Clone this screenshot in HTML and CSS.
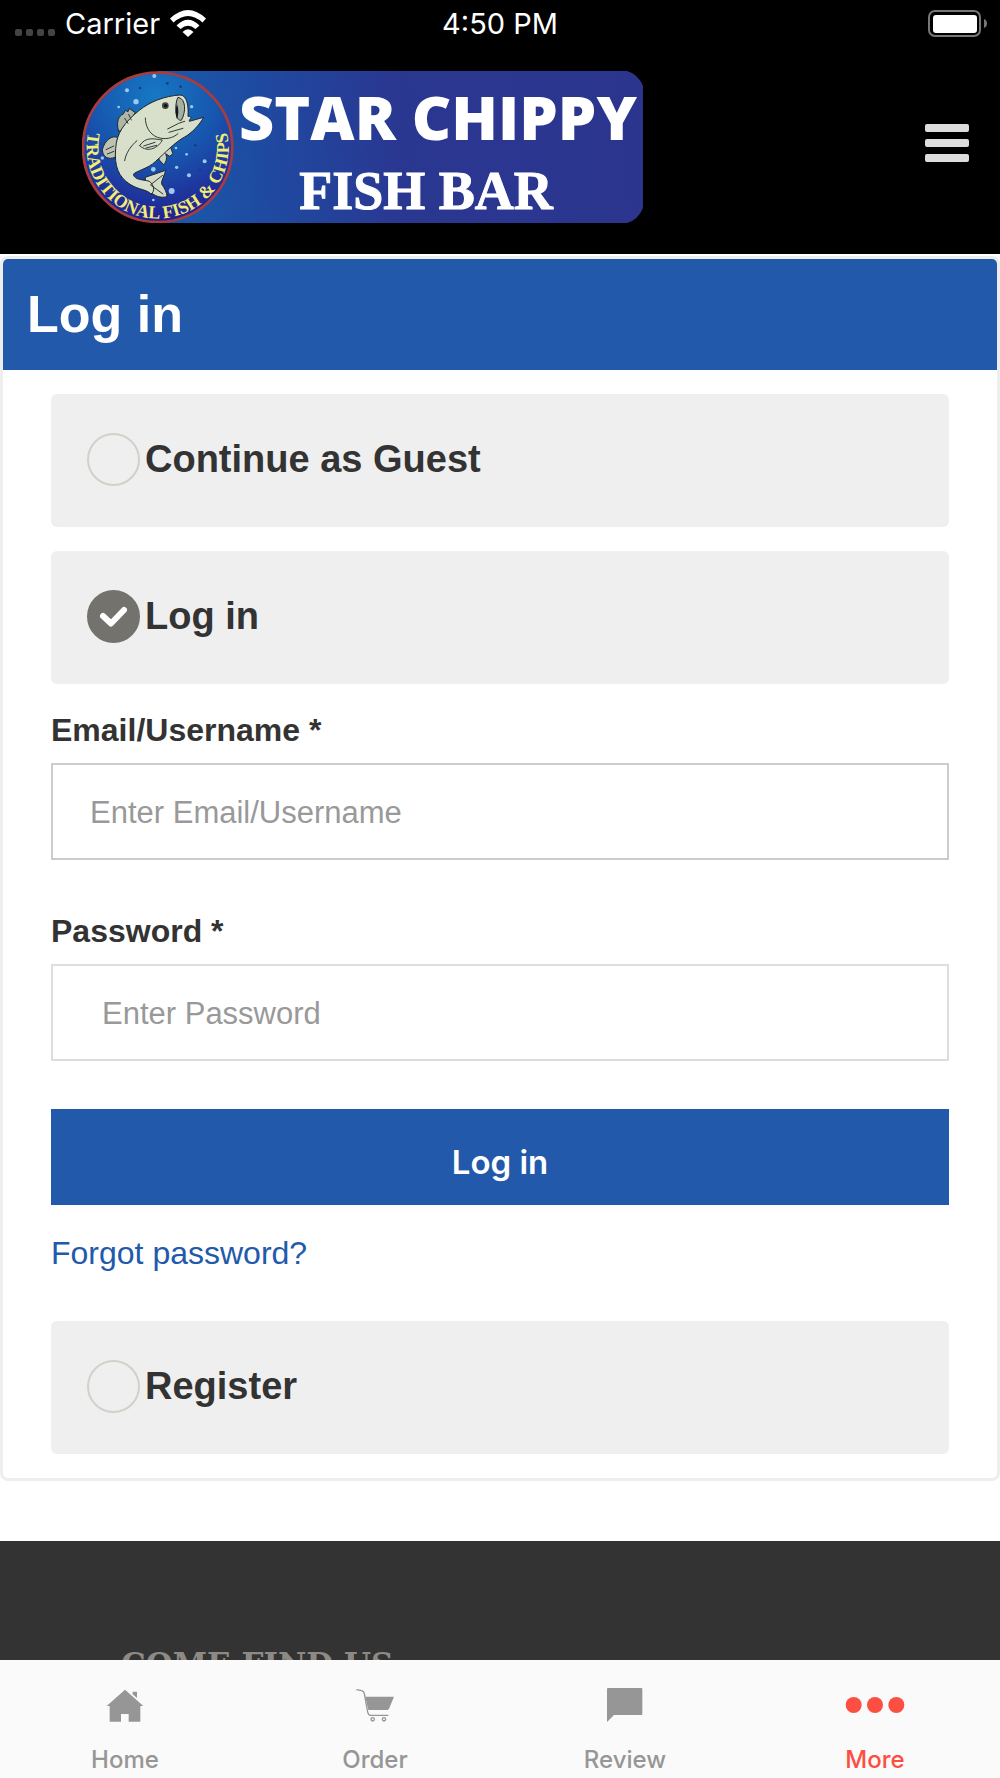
FILE: index.html
```html
<!DOCTYPE html>
<html lang="en">
<head>
<meta charset="utf-8">
<meta name="viewport" content="width=device-width, initial-scale=1">
<title>Star Chippy Fish Bar - Log in</title>
<link rel="stylesheet" href="styles.css">
</head>
<body>
<div class="status-bar">
  <div class="status-carrier">
    <span class="signal"><i></i><i></i><i></i><i></i></span>
    <span>Carrier</span>
    <svg class="wifi" viewBox="0 0 36 27" aria-hidden="true">
      <path d="M0 8.500Q18-8.500 36 8.500L32.500 12.500Q18-.5 3.500 12.500Z" fill="#fff"/>
      <path d="M6.500 15.500Q18 4 29.500 15.500L25.500 19Q18 12.500 10.500 19Z" fill="#fff"/>
      <path d="M12.500 22Q18 16.500 23.500 22L18 27Z" fill="#fff"/>
    </svg>
  </div>
  <time>4:50 PM</time>
  <svg class="battery" viewBox="0 0 60 27" aria-hidden="true">
    <rect x="1" y="1" width="51" height="25" rx="6" fill="none" stroke="#777" stroke-width="2"/>
    <rect x="5" y="5" width="44" height="18" rx="3" fill="#fff"/>
    <path d="M56 9q3 1 3 4.500t-3 4.500z" fill="#777"/>
  </svg>
</div>

<header class="site-header">
  <a class="logo" href="#" aria-label="Star Chippy Fish Bar">
    <svg viewBox="0 0 561 152">
      <defs>
        <linearGradient id="plate" gradientUnits="userSpaceOnUse" x1="76" y1="90" x2="561" y2="50">
          <stop offset="0" stop-color="#1a5aac"/>
          <stop offset=".2" stop-color="#1e4ba2"/>
          <stop offset=".5" stop-color="#2a3791"/>
          <stop offset="1" stop-color="#2b358e"/>
        </linearGradient>
        <radialGradient id="sea" cx=".48" cy=".15" r=".85">
          <stop offset="0" stop-color="#1678c4"/>
          <stop offset=".5" stop-color="#1756ae"/>
          <stop offset="1" stop-color="#231f92"/>
        </radialGradient>
        <path id="motto" d="M65 184A213 213 0 1 0 461 184"/>
      </defs>
      <path d="M76 0H545Q556 3 561 15V137Q556 149 545 152H76Z" fill="url(#plate)"/>
      <g transform="translate(-12 -11) scale(.3333)">
        <circle cx="263" cy="262" r="224" fill="url(#sea)" stroke="#a83c3e" stroke-width="8"/>
        <g fill="#9fc8ee">
          <circle cx="253" cy="48" r="6"/><circle cx="171" cy="91" r="6"/><circle cx="198" cy="125" r="8"/>
          <circle cx="365" cy="140" r="5"/><circle cx="404" cy="304" r="6"/><circle cx="357" cy="346" r="6"/>
          <circle cx="320" cy="322" r="5"/><circle cx="350" cy="283" r="4"/><circle cx="305" cy="393" r="9"/>
          <circle cx="250" cy="420" r="4"/><circle cx="146" cy="141" r="4"/><circle cx="250" cy="328" r="7"/>
          <circle cx="318" cy="264" r="4"/><circle cx="97" cy="294" r="5"/>
        </g>
        <g fill="#143c80">
          <circle cx="210" cy="84" r="4"/><circle cx="292" cy="70" r="4"/><circle cx="332" cy="80" r="4"/>
          <circle cx="376" cy="256" r="4"/><circle cx="390" cy="330" r="4"/><circle cx="360" cy="390" r="4"/>
        </g>
        <g stroke="#1c2730" stroke-width="3" stroke-linejoin="round">
          <path d="M146 214C137 186 147 166 160 162L166 151L174 155L178 145L196 158L162 208Z" fill="#aeb6a5"/>
          <path d="M143 233C128 224 104 240 97 269C98 291 114 300 136 292Z" fill="#bcc3b2"/>
          <path d="M226 352L287 331C284 346 273 362 275 372C284 385 291 398 291 410C267 417 246 403 226 384Z" fill="#d3dac5"/>
          <path d="M262 283L268 300L281 314C291 303 291 291 287 281L299 289L309 281L302 263Z" fill="#cdd4c0"/>
          <path d="M330 105C284 108 240 125 208 151C164 186 139 220 137 266C132 318 146 352 180 373C204 389 232 389 243 402C256 394 252 374 238 364C218 358 194 361 190 343C200 332 234 326 256 305C286 278 314 247 344 231C365 220 389 194 401 172L358 184C357 177 372 169 354 169C356 140 352 105 330 105Z" fill="#d8dfca"/>
          <path d="M324 112C349 116 348 157 334 181C314 184 314 128 324 112Z" fill="#a8b09f"/>
        </g>
        <path d="M321 132Q329 154 321 178Q313 157 321 132Z" fill="#111920"/>
        <circle cx="286" cy="137" r="10" fill="#3f4740"/>
        <circle cx="287" cy="137" r="5" fill="#0c1114"/>
        <g fill="none" stroke="#303936" stroke-width="3" stroke-linecap="round">
          <path d="M226 174C226 198 238 222 262 232C285 240 309 235 324 221"/>
          <path d="M164 302C168 278 183 257 201 242"/>
          <path d="M293 207L326 190L344 184M297 217L339 205M242 374L278 346M243 376L279 402"/>
          <path d="M209 257C227 228 253 237 277 240C268 260 235 282 209 257M221 258L255 247M228 264L260 256"/>
          <path d="M164 175L174 190M176 163L184 180M108 269L131 258M112 282L132 274"/>
        </g>
        <text class="logo-motto" text-anchor="middle"><textPath href="#motto" startOffset="50%">TRADITIONAL FISH &amp; CHIPS</textPath></text>
      </g>
      <text class="logo-name" x="356" y="69" text-anchor="middle">STAR CHIPPY</text>
      <text class="logo-kind" x="344" y="138" text-anchor="middle">FISH BAR</text>
    </svg>
  </a>
  <button class="menu-button" type="button" aria-label="Menu"><span></span><span></span><span></span></button>
</header>

<main class="panel">
  <h1 class="panel-title">Log in</h1>
  <form class="panel-body">
    <div class="options">
      <label class="option"><input type="radio" name="mode" value="guest">Continue as Guest</label>
      <label class="option"><input type="radio" name="mode" value="login" checked>Log in</label>
    </div>
    <div class="fields">
      <div class="field">
        <label for="email">Email/Username *</label>
        <input class="input-email" id="email" type="text" placeholder="Enter Email/Username">
      </div>
      <div class="field">
        <label for="password">Password *</label>
        <input class="input-password" id="password" type="password" placeholder="Enter Password">
      </div>
    </div>
    <button class="submit" type="submit">Log in</button>
    <a class="forgot" href="#">Forgot password?</a>
    <label class="option"><input type="radio" name="mode" value="register">Register</label>
  </form>
</main>

<footer class="site-footer">
  <h2>COME FIND US</h2>
</footer>

<nav class="tab-bar">
  <a href="#">
    <svg viewBox="0 0 180 108" aria-hidden="true"><path d="M90 8L145 57H136V104H101V81H78V104H44V57H35ZM113 14H126V33L113 22Z"/></svg>
    Home
  </a>
  <a href="#">
    <svg viewBox="0 0 180 108" aria-hidden="true">
      <path d="M61 29H147L132 65Q130 69 125 69H70Z"/>
      <path d="M34 8L50 11Q57 13 58 20L68 75Q70 85 77 85H130" fill="none" stroke="currentColor" stroke-width="4"/>
      <g fill="none" stroke="currentColor" stroke-width="4"><circle cx="83" cy="97" r="5"/><circle cx="117" cy="97" r="5"/></g>
    </svg>
    Order
  </a>
  <a href="#">
    <svg viewBox="0 0 180 108" aria-hidden="true"><path d="M39 3H139Q142 3 142 6V81Q142 84 139 84H57L36 105V6Q36 3 39 3Z"/></svg>
    Review
  </a>
  <a class="active" href="#" aria-current="page">
    <svg viewBox="0 0 180 108" aria-hidden="true"><circle cx="26" cy="54" r="24"/><circle cx="90" cy="54" r="24"/><circle cx="154" cy="54" r="24"/></svg>
    More
  </a>
</nav>
</body>
</html>
```
FILE: styles.css
```css
* {
  box-sizing: border-box;
}

body {
  margin: 0;
  min-height: 100vh;
  display: flex;
  flex-direction: column;
  background: #fff;
  color: #333;
  font-family: "Liberation Sans", Arial, sans-serif;
  font-size: 32px;
}

button,
input {
  font-family: inherit;
}

.status-bar {
  display: grid;
  grid-template-columns: 1fr auto 1fr;
  align-items: center;
  height: 47px;
  padding: 0 12px;
  background: #000;
  color: #fff;
  font-family: Inter, sans-serif;
  font-size: 29px;
}

.status-carrier {
  display: flex;
  align-items: center;
  gap: 10px;
}

.signal {
  display: flex;
  gap: 4px;
  padding: 18px 0 0 3px;
}

.signal i {
  width: 7px;
  height: 7px;
  border-radius: 2px;
  background: #444;
}

.wifi {
  width: 36px;
  height: 27px;
}

.battery {
  width: 60px;
  height: 27px;
  justify-self: end;
}

.site-header {
  display: flex;
  align-items: center;
  justify-content: space-between;
  padding: 24px 31px 31px 82px;
  background: #000;
}

.logo svg {
  display: block;
  width: 561px;
  height: 152px;
}

.logo-name {
  fill: #fff;
  font: 800 61px "Open Sans", "Noto Sans", sans-serif;
}

.logo-kind {
  fill: #fff;
  stroke: #fff;
  stroke-width: 1px;
  font: bold 54px "Liberation Serif", serif;
}

.logo-motto {
  fill: #f3ed72;
  font: bold 54px "Liberation Serif", serif;
}

.menu-button {
  display: flex;
  flex-direction: column;
  gap: 7px;
  padding: 0 0 9px;
  border: 0;
  background: none;
}

.menu-button span {
  width: 44px;
  height: 8px;
  border-radius: 2px;
  background: #ddd;
}

.panel {
  margin: 2px 0 60px;
  border: 3px solid #eee;
  border-radius: 8px;
}

.panel-title {
  margin: 0;
  padding: 0 24px;
  border-radius: 5px 5px 0 0;
  background: #2259aa;
  color: #fff;
  font-size: 52px;
  line-height: 111px;
}

.panel-body {
  display: flex;
  flex-direction: column;
  padding: 24px 48px;
}

.options {
  display: flex;
  flex-direction: column;
  gap: 24px;
}

.option {
  display: flex;
  align-items: center;
  gap: 5px;
  height: 133px;
  padding: 0 36px 3px;
  border-radius: 6px;
  background: #efefef;
  font-size: 38px;
  font-weight: bold;
}

.option input {
  appearance: none;
  width: 53px;
  height: 53px;
  margin: 0;
  border: 2px solid #d3d0c9;
  border-radius: 50%;
}

.option input:checked {
  border-color: #73726d;
  background: #73726d url("data:image/svg+xml,%3Csvg xmlns='http://www.w3.org/2000/svg' viewBox='0 0 53 53'%3E%3Cpath d='M16 26L24 33.500L37 20' fill='none' stroke='%23fff' stroke-width='6' stroke-linecap='round' stroke-linejoin='round'/%3E%3C/svg%3E") center / 53px 53px no-repeat;
}

.fields {
  display: flex;
  flex-direction: column;
  gap: 53px;
  margin: 28px 0 48px;
}

.field {
  display: flex;
  flex-direction: column;
  gap: 15px;
}

.field label {
  font-weight: bold;
  line-height: 36px;
}

.field input {
  width: 100%;
  height: 97px;
  border: 2px solid #ccc;
  border-radius: 0;
  background: #fff;
  color: #333;
  font-size: 31px;
}

.field input::placeholder {
  color: #999;
  opacity: 1;
}

.field .input-email {
  padding: 3px 37px 0;
}

.field .input-password {
  padding: 3px 49px 0;
  border-color: #ddd;
}

.submit {
  height: 96px;
  padding: 10px 48px 0;
  border: 0;
  background: #2259aa;
  color: #fff;
  font-family: Inter, sans-serif;
  font-size: 33px;
  font-weight: 600;
}

.forgot {
  align-self: flex-start;
  margin: 30px 0 50px;
  color: #2259aa;
  line-height: 36px;
  text-decoration: none;
}

.site-footer {
  flex: 1;
  padding: 103px 121px 80px;
  background: #333;
}

.site-footer h2 {
  margin: 0;
  color: #8d8a86;
  font: bold 31px/40px "DejaVu Serif", serif;
}

.tab-bar {
  position: fixed;
  right: 0;
  bottom: 0;
  left: 0;
  display: grid;
  grid-template-columns: repeat(4, 1fr);
  padding: 27px 0 4px;
  background: #fafafa;
}

.tab-bar a {
  display: flex;
  flex-direction: column;
  align-items: center;
  gap: 23px;
  color: #969696;
  font: 500 24px/28px Inter, sans-serif;
  text-decoration: none;
}

.tab-bar a.active {
  color: #fc4f41;
}

.tab-bar svg {
  width: 60px;
  height: 36px;
  fill: currentColor;
}
```
